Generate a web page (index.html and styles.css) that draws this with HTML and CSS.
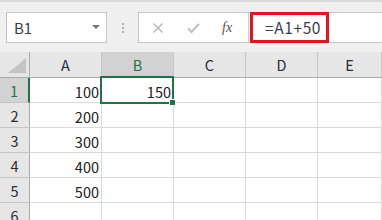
FILE: index.html
```html
<!DOCTYPE html>
<html lang="ja">
<head>
  <meta charset="UTF-8">
  <title>Excel</title>
  <link rel="stylesheet" href="styles.css">
</head>
<body>

  <div class="toolbar">
    <div class="namebox">
      <span>B1</span>
      <span class="caret"></span>
    </div>
    <div class="grip"><i></i><i></i><i></i></div>
    <div class="bar">
      <div class="fx-area">
        <svg class="icon" width="12" height="12" viewBox="0 0 12 12">
          <path d="M1.5 1.5 L10.5 10.5 M10.5 1.5 L1.5 10.5" stroke="#b3b3b3" stroke-width="1.3" fill="none"/>
        </svg>
        <svg class="icon" width="13" height="12" viewBox="0 0 13 12">
          <path d="M1 6.5 L4.5 10 L12 2" stroke="#bdbdbd" stroke-width="2" fill="none"/>
        </svg>
        <span class="fx">fx</span>
      </div>
      <div class="formula">
        <span class="highlight">=A1+50</span>
      </div>
    </div>
  </div>

  <div class="sheet">
    <div class="corner">
      <svg width="30" height="26" viewBox="0 0 30 26"><polygon points="8,21 26,21 26,6" fill="#c4c4c4"/></svg>
    </div>
    <div class="col-head">A</div>
    <div class="col-head active">B</div>
    <div class="col-head">C</div>
    <div class="col-head">D</div>
    <div class="col-head">E</div>

    <div class="row-head active">1</div>
    <div class="cell">100</div>
    <div class="cell selected">150<span class="frame"><span class="handle"></span></span></div>
    <div class="cell"></div>
    <div class="cell"></div>
    <div class="cell"></div>

    <div class="row-head">2</div>
    <div class="cell">200</div>
    <div class="cell"></div>
    <div class="cell"></div>
    <div class="cell"></div>
    <div class="cell"></div>

    <div class="row-head">3</div>
    <div class="cell">300</div>
    <div class="cell"></div>
    <div class="cell"></div>
    <div class="cell"></div>
    <div class="cell"></div>

    <div class="row-head">4</div>
    <div class="cell">400</div>
    <div class="cell"></div>
    <div class="cell"></div>
    <div class="cell"></div>
    <div class="cell"></div>

    <div class="row-head">5</div>
    <div class="cell">500</div>
    <div class="cell"></div>
    <div class="cell"></div>
    <div class="cell"></div>
    <div class="cell"></div>

    <div class="row-head">6</div>
    <div class="cell"></div>
    <div class="cell"></div>
    <div class="cell"></div>
    <div class="cell"></div>
    <div class="cell"></div>
  </div>

</body>
</html>
```

FILE: styles.css
```css
body {
  margin: 0;
  width: 382px;
  height: 220px;
  overflow: hidden;
  background-color: #fff;
  font-family: "Noto Sans CJK JP", "Noto Sans", sans-serif;
  color: #333;
}

.toolbar {
  height: 52px;
  box-sizing: border-box;
  background-color: #f0f0f0;
  border-top: 2px solid #d9d9d9;
  padding-top: 10px;
  display: flex;
  align-items: flex-start;
}

.namebox {
  margin-left: 6px;
  width: 101px;
  height: 31px;
  box-sizing: border-box;
  background-color: #fff;
  border: 1px solid #c6c6c6;
  display: flex;
  align-items: center;
  justify-content: space-between;
  padding: 0 6px 0 7px;
  font-size: 15px;
  color: #3a3f4a;
}

.caret {
  width: 0;
  height: 0;
  border-left: 4px solid transparent;
  border-right: 4px solid transparent;
  border-top: 4px solid #777;
  margin-top: -2px;
}

.grip {
  width: 31px;
  height: 31px;
  display: flex;
  flex-direction: column;
  align-items: center;
  justify-content: center;
  gap: 2px;
}

.grip i {
  width: 2px;
  height: 2px;
  background-color: #b0b0b0;
}

.bar {
  flex: 1;
  height: 31px;
  box-sizing: border-box;
  background-color: #fff;
  border: 1px solid #c6c6c6;
  border-right: none;
  display: flex;
}

.fx-area {
  width: 110px;
  box-sizing: border-box;
  border-right: 1px solid #d0d0d0;
  display: flex;
  align-items: center;
  padding-left: 13px;
  gap: 23px;
}

.fx {
  font-family: "Liberation Serif", serif;
  font-style: italic;
  font-size: 14px;
  color: #555;
  margin-left: -1px;
}

.formula {
  flex: 1;
  display: flex;
  padding-left: 1px;
}

.highlight {
  width: 79px;
  box-sizing: border-box;
  margin-top: -1px;
  height: 31px;
  border: 3px solid #e8141c;
  padding-left: 12px;
  font-size: 15.5px;
  letter-spacing: 0.6px;
  line-height: 24px;
  color: #3a3f4a;
}

.sheet {
  display: grid;
  grid-template-columns: 30px 72px 72px 72px 72px 1fr;
  grid-template-rows: 26px repeat(6, 25px);
  font-size: 14.5px;
}

.corner,
.col-head,
.row-head {
  background-color: #e6e6e6;
  box-sizing: border-box;
}

.corner {
  border-right: 1px solid #ababab;
  border-bottom: 1px solid #ababab;
}

.col-head {
  border-right: 1px solid #c6c6c6;
  border-bottom: 1px solid #ababab;
  display: flex;
  align-items: center;
  justify-content: center;
  color: #2a2e36;
}

.row-head {
  border-right: 1px solid #ababab;
  border-bottom: 1px solid #c6c6c6;
  display: flex;
  align-items: center;
  justify-content: center;
  color: #2a2e36;
}

.col-head.active,
.row-head.active {
  background-color: #d2d2d2;
  color: #217346;
}

.col-head.active {
  border-bottom: 2px solid #217346;
}

.row-head.active {
  border-right: 2px solid #217346;
}

.cell {
  box-sizing: border-box;
  border-right: 1px solid #d9d9d9;
  border-bottom: 1px solid #d9d9d9;
  display: flex;
  align-items: center;
  justify-content: flex-end;
  padding: 2px 2px 0 0;
  color: #222;
}

.selected {
  position: relative;
}

.frame {
  position: absolute;
  left: -2px;
  top: -2px;
  right: -1px;
  bottom: -2px;
  border: 2px solid #217346;
}

.handle {
  position: absolute;
  right: -4px;
  bottom: -4px;
  width: 5px;
  height: 5px;
  background-color: #217346;
  border: 1px solid #fff;
}
```
